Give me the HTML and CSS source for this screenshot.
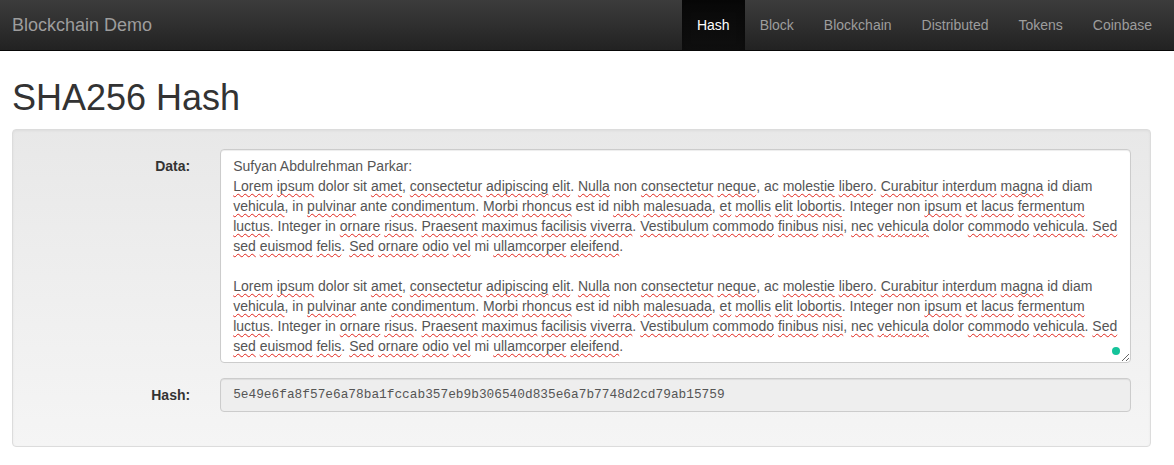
FILE: index.html
```html
<!DOCTYPE html>
<html lang="en">
<head>
<meta charset="utf-8">
<title>Blockchain Demo</title>
<link rel="stylesheet" href="styles.css">
</head>
<body>
<nav class="navbar">
  <a class="brand" href="#">Blockchain Demo</a>
  <ul class="nav">
    <li class="active"><a href="#">Hash</a></li>
    <li><a href="#">Block</a></li>
    <li><a href="#">Blockchain</a></li>
    <li><a href="#">Distributed</a></li>
    <li><a href="#">Tokens</a></li>
    <li><a href="#">Coinbase</a></li>
  </ul>
</nav>
<main class="container">
  <h1 class="title">SHA256 Hash</h1>
  <div class="well">
    <div class="form-group">
      <label class="control-label">Data:</label>
      <div class="control">
        <div class="textarea" role="textbox" aria-multiline="true" contenteditable="true" spellcheck="false">
          <div class="line">Sufyan Abdulrehman Parkar:</div>
          <div class="line"><s>Lorem</s> <s>ipsum</s> dolor sit <s>amet</s>, <s>consectetur</s> <s>adipiscing</s> <s>elit</s>. <s>Nulla</s> non <s>consectetur</s> <s>neque</s>, ac <s>molestie</s> <s>libero</s>. <s>Curabitur</s> <s>interdum</s> <s>magna</s> id diam</div>
          <div class="line"><s>vehicula</s>, in <s>pulvinar</s> ante <s>condimentum</s>. <s>Morbi</s> <s>rhoncus</s> est id <s>nibh</s> <s>malesuada</s>, <s>et</s> <s>mollis</s> <s>elit</s> <s>lobortis</s>. Integer non <s>ipsum</s> <s>et</s> <s>lacus</s> <s>fermentum</s></div>
          <div class="line"><s>luctus</s>. Integer in <s>ornare</s> <s>risus</s>. <s>Praesent</s> <s>maximus</s> <s>facilisis</s> <s>viverra</s>. <s>Vestibulum</s> <s>commodo</s> <s>finibus</s> <s>nisi</s>, <s>nec</s> <s>vehicula</s> dolor <s>commodo</s> <s>vehicula</s>. <s>Sed</s></div>
          <div class="line"><s>sed</s> <s>euismod</s> <s>felis</s>. <s>Sed</s> <s>ornare</s> <s>odio</s> <s>vel</s> mi <s>ullamcorper</s> <s>eleifend</s>.</div>
          <div class="line">&nbsp;</div>
          <div class="line"><s>Lorem</s> <s>ipsum</s> dolor sit <s>amet</s>, <s>consectetur</s> <s>adipiscing</s> <s>elit</s>. <s>Nulla</s> non <s>consectetur</s> <s>neque</s>, ac <s>molestie</s> <s>libero</s>. <s>Curabitur</s> <s>interdum</s> <s>magna</s> id diam</div>
          <div class="line"><s>vehicula</s>, in <s>pulvinar</s> ante <s>condimentum</s>. <s>Morbi</s> <s>rhoncus</s> est id <s>nibh</s> <s>malesuada</s>, <s>et</s> <s>mollis</s> <s>elit</s> <s>lobortis</s>. Integer non <s>ipsum</s> <s>et</s> <s>lacus</s> <s>fermentum</s></div>
          <div class="line"><s>luctus</s>. Integer in <s>ornare</s> <s>risus</s>. <s>Praesent</s> <s>maximus</s> <s>facilisis</s> <s>viverra</s>. <s>Vestibulum</s> <s>commodo</s> <s>finibus</s> <s>nisi</s>, <s>nec</s> <s>vehicula</s> dolor <s>commodo</s> <s>vehicula</s>. <s>Sed</s></div>
          <div class="line"><s>sed</s> <s>euismod</s> <s>felis</s>. <s>Sed</s> <s>ornare</s> <s>odio</s> <s>vel</s> mi <s>ullamcorper</s> <s>eleifend</s>.</div>
        </div>
        <span class="assist-dot"></span>
      </div>
    </div>
    <div class="form-group">
      <label class="control-label">Hash:</label>
      <div class="control">
        <div class="input readonly">5e49e6fa8f57e6a78ba1fccab357eb9b306540d835e6a7b7748d2cd79ab15759</div>
      </div>
    </div>
  </div>
</main>
</body>
</html>
```

FILE: styles.css
```css
* { box-sizing: border-box; }
html, body { margin: 0; padding: 0; }
body {
  font-family: "Liberation Sans", Arial, Helvetica, sans-serif;
  font-size: 14px;
  line-height: 20px;
  color: #333;
  background: #fff;
}
a { text-decoration: none; }

.navbar {
  display: flex;
  justify-content: space-between;
  align-items: stretch;
  height: 51px;
  padding: 0 7px 0 12px;
  background: linear-gradient(to bottom, #3c3c3c 0, #222 100%);
  border-bottom: 1px solid #080808;
}
.brand {
  display: block;
  height: 50px;
  padding: 15px 0;
  font-size: 18px;
  line-height: 20px;
  color: #9d9d9d;
}
.nav {
  display: flex;
  list-style: none;
  margin: 0;
  padding: 0;
}
.nav a {
  display: block;
  height: 50px;
  padding: 15px 15px;
  line-height: 20px;
  color: #9d9d9d;
}
.nav .active a {
  color: #fff;
  background: linear-gradient(to bottom, #080808 0, #0f0f0f 100%);
  box-shadow: inset 0 3px 9px rgba(0,0,0,.25);
  text-shadow: 0 -1px 0 rgba(0,0,0,.25);
}

.container {
  padding: 0 23px 0 12px;
}
.title {
  margin: 27px 0 11px;
  font-size: 36px;
  font-weight: 500;
  line-height: 40px;
  color: #333;
}
.well {
  padding: 19px;
  border: 1px solid #dcdcdc;
  border-radius: 4px;
  background: linear-gradient(to bottom, #e8e8e8 0, #f5f5f5 100%);
  box-shadow: inset 0 1px 3px rgba(0,0,0,.05), 0 1px 0 rgba(255,255,255,.1);
}
.form-group {
  display: grid;
  grid-template-columns: 16.6667% 83.3333%;
  margin: 0 -15px 15px;
}
.control-label {
  padding: 7px 15px 0;
  text-align: right;
  font-weight: bold;
}
.control {
  position: relative;
  padding: 0 15px;
}
.textarea {
  height: 214px;
  padding: 6px 12px;
  border: 1px solid #ccc;
  border-radius: 4px;
  background: #fff;
  color: #555;
  box-shadow: inset 0 1px 1px rgba(0,0,0,.075);
  white-space: nowrap;
  overflow: hidden;
  resize: vertical;
  outline: none;
}
.textarea s {
  text-decoration: underline wavy #e0261c;
  text-decoration-thickness: 1px;
  text-underline-offset: 2px;
  text-decoration-skip-ink: none;
}
.assist-dot {
  position: absolute;
  right: 26px;
  bottom: 8px;
  width: 8px;
  height: 8px;
  border-radius: 50%;
  background: #15c39a;
}
.input {
  height: 34px;
  padding: 6px 12px;
  border: 1px solid #ccc;
  border-radius: 4px;
  box-shadow: inset 0 1px 1px rgba(0,0,0,.075);
  font-family: "Liberation Mono", Consolas, monospace;
  font-size: 12.8px;
  line-height: 20px;
  color: #555;
  white-space: nowrap;
  overflow: hidden;
}
.input.readonly { background: #eee; }
```
